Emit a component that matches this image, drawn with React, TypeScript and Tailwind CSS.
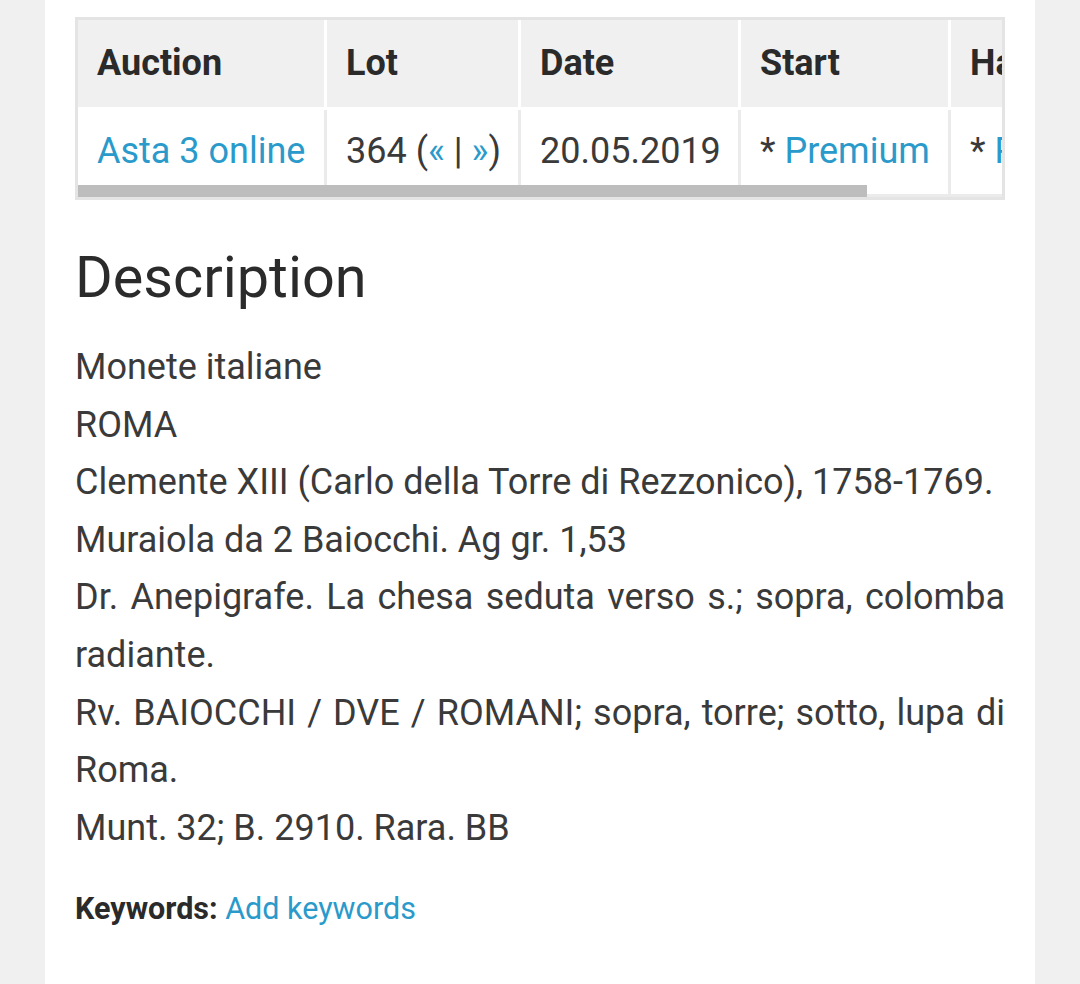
import React from 'react';

// ─── Data ─────────────────────────────────────────────────────────────────────

const COLUMNS = [
  { label: 'Auction', width: 'w-[249px]' },
  { label: 'Lot', width: 'w-[194px]' },
  { label: 'Date', width: 'w-[220px]' },
  { label: 'Start', width: 'w-[210px]' },
  { label: 'Hammer', width: 'w-[220px]' },
];

const DESCRIPTION_LINES = [
  'Monete italiane',
  'ROMA',
  'Clemente XIII (Carlo della Torre di Rezzonico), 1758-1769.',
  'Muraiola da 2 Baiocchi. Ag gr. 1,53',
  'Dr. Anepigrafe. La chesa seduta verso s.; sopra, colomba radiante.',
  'Rv. BAIOCCHI / DVE / ROMANI; sopra, torre; sotto, lupa di Roma.',
  'Munt. 32; B. 2910. Rara. BB',
];

const LINK = 'text-[#2a9acb]';
const TD = 'h-[87px] border-b-[3px] border-r-[3px] border-[#ebebeb] px-[19px] align-middle whitespace-nowrap';

// ─────────────────────────────────────────────────────────────────────────────

export default function App() {
  return (
    <div className="min-h-screen bg-[#f0f0f0] font-['Roboto',sans-serif]">
      <div className="mx-[45px] min-h-[984px] bg-white px-[30px] pt-[17px] pb-10">
        {/* Auction table, scrolled horizontally */}
        <div className="relative overflow-hidden border-[3px] border-[#e4e4e4]">
          <table className="w-[1093px] table-fixed border-separate border-spacing-0 text-left text-[36px] leading-[1.6]">
            <thead>
              <tr>
                {COLUMNS.map((col) => (
                  <th
                    key={col.label}
                    className={`${col.width} h-[90px] border-b-[3px] border-r-[3px] border-white bg-[#f0f0f0] px-[19px] align-middle font-bold whitespace-nowrap text-[#2a2a2a]`}
                  >
                    {col.label}
                  </th>
                ))}
              </tr>
            </thead>
            <tbody className="text-[#3a3a3a]">
              <tr>
                <td className={TD}>
                  <a className={LINK}>Asta 3 online</a>
                </td>
                <td className={TD}>
                  364 (<a className={LINK}>«</a> | <a className={LINK}>»</a>)
                </td>
                <td className={TD}>20.05.2019</td>
                <td className={TD}>
                  * <a className={LINK}>Premium</a>
                </td>
                <td className={TD}>
                  * <a className={LINK}>Premium</a>
                </td>
              </tr>
            </tbody>
          </table>
          {/* Overlay scrollbar thumb */}
          <div className="absolute bottom-0 left-0 h-3 w-[789px] bg-[#bdbdbd]" />
        </div>

        {/* Description */}
        <h2 className="mt-[43px] text-[57.6px] leading-[1.2] font-normal text-[#2b2b2b]">Description</h2>
        <p className="mt-[27px] text-justify text-[36px] leading-[1.6] text-[#3a3a3a]">
          {DESCRIPTION_LINES.map((line, i) => (
            <React.Fragment key={i}>
              {line}
              {i < DESCRIPTION_LINES.length - 1 && <br />}
            </React.Fragment>
          ))}
        </p>

        <p className="mt-[28px] text-[30.5px] leading-[1.6] text-[#3a3a3a]">
          <strong className="font-bold text-[#2a2a2a]">Keywords:</strong>{' '}
          <a className={LINK}>Add keywords</a>
        </p>
      </div>
    </div>
  );
}
